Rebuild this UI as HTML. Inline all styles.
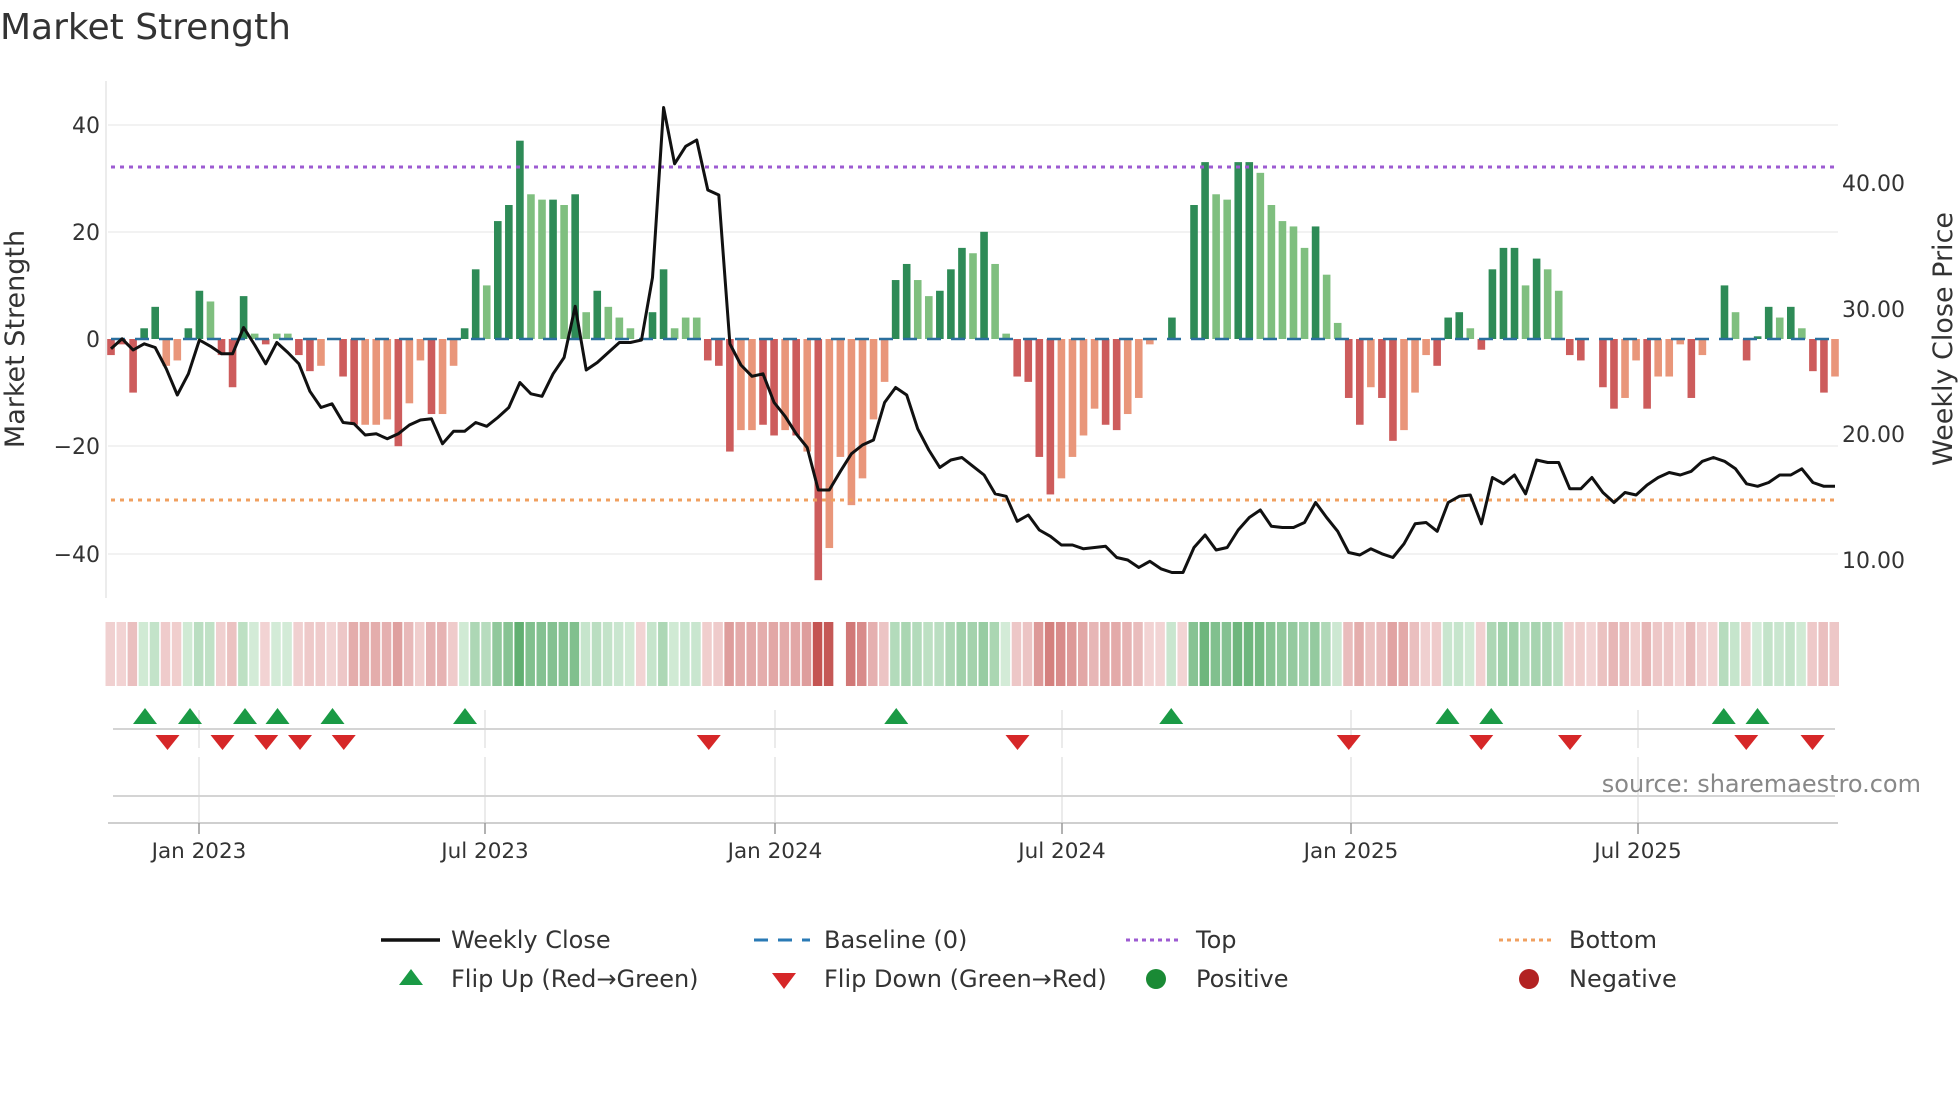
<!DOCTYPE html>
<html><head><meta charset="utf-8"><style>
html,body{margin:0;padding:0;background:#fff;width:1960px;height:1102px;overflow:hidden}
svg{display:block;font-family:"DejaVu Sans","Liberation Sans",sans-serif}
</style></head><body>
<svg id="s" width="1960" height="1102" viewBox="0 0 1960 1102" xmlns="http://www.w3.org/2000/svg">
<text x="0" y="39" font-size="36" fill="#333">Market Strength</text>
<g stroke="#eeeeee" stroke-width="1.5">
<line x1="108" x2="1838" y1="125" y2="125"/><line x1="108" x2="1838" y1="232" y2="232"/>
<line x1="108" x2="1838" y1="446" y2="446"/><line x1="108" x2="1838" y1="554" y2="554"/>
</g>
<line x1="106" x2="106" y1="81" y2="598" stroke="#e6e6e6" stroke-width="1.5"/>
<g font-size="22" fill="#333" text-anchor="end">
<text x="100" y="133">40</text><text x="100" y="240">20</text><text x="100" y="347">0</text>
<text x="100" y="454">−20</text><text x="100" y="562">−40</text>
</g>
<g font-size="22" fill="#333">
<text x="1842" y="191">40.00</text><text x="1842" y="317">30.00</text>
<text x="1842" y="442">20.00</text><text x="1842" y="568">10.00</text>
</g>
<text transform="translate(24,339) rotate(-90)" font-size="27" fill="#333" text-anchor="middle">Market Strength</text>
<text transform="translate(1952,339) rotate(-90)" font-size="27" fill="#333" text-anchor="middle">Weekly Close Price</text>
<g id="bars"></g>
<line x1="111" x2="1838" y1="339" y2="339" stroke="#2a6f9e" stroke-width="2.5" stroke-dasharray="14,10"/>
<line x1="111" x2="1838" y1="167" y2="167" stroke="#9d5bd2" stroke-width="3" stroke-dasharray="4,5"/>
<line x1="111" x2="1838" y1="500" y2="500" stroke="#f0a060" stroke-width="3" stroke-dasharray="4,5"/>
<polyline id="pl" fill="none" stroke="#111" stroke-width="3" stroke-linejoin="round"/>
<g id="heat"></g>
<g stroke="#e4e4e4" stroke-width="1.5">
<line x1="199" x2="199" y1="710" y2="748"/><line x1="485" x2="485" y1="710" y2="748"/><line x1="775" x2="775" y1="710" y2="748"/>
<line x1="1062" x2="1062" y1="710" y2="748"/><line x1="1351" x2="1351" y1="710" y2="748"/><line x1="1638" x2="1638" y1="710" y2="748"/>
<line x1="199" x2="199" y1="757" y2="823"/><line x1="485" x2="485" y1="757" y2="823"/><line x1="775" x2="775" y1="757" y2="823"/>
<line x1="1062" x2="1062" y1="757" y2="823"/><line x1="1351" x2="1351" y1="757" y2="823"/><line x1="1638" x2="1638" y1="757" y2="823"/>
</g>
<line x1="113" x2="1835" y1="729" y2="729" stroke="#d4d4d4" stroke-width="2"/>
<line x1="113" x2="1835" y1="796" y2="796" stroke="#d4d4d4" stroke-width="2"/>
<line x1="108" x2="1838" y1="823" y2="823" stroke="#cfcfcf" stroke-width="2"/>
<g stroke="#999" stroke-width="1.5">
<line x1="199" x2="199" y1="823" y2="834"/><line x1="485" x2="485" y1="823" y2="834"/><line x1="775" x2="775" y1="823" y2="834"/>
<line x1="1062" x2="1062" y1="823" y2="834"/><line x1="1351" x2="1351" y1="823" y2="834"/><line x1="1638" x2="1638" y1="823" y2="834"/>
</g>
<g id="tri"></g>
<text x="1921" y="792" font-size="24" fill="#888" text-anchor="end">source: sharemaestro.com</text>
<g font-size="21.5" fill="#333" text-anchor="middle">
<text x="199" y="858">Jan 2023</text><text x="485" y="858">Jul 2023</text><text x="775" y="858">Jan 2024</text>
<text x="1062" y="858">Jul 2024</text><text x="1351" y="858">Jan 2025</text><text x="1638" y="858">Jul 2025</text>
</g>
<g font-size="24" fill="#333">
<line x1="381" x2="440" y1="940" y2="940" stroke="#111" stroke-width="3.5"/>
<text x="451" y="948">Weekly Close</text>
<line x1="754" x2="810" y1="940" y2="940" stroke="#2a7ab5" stroke-width="3" stroke-dasharray="14,10"/>
<text x="824" y="948">Baseline (0)</text>
<line x1="1126" x2="1182" y1="940" y2="940" stroke="#9d5bd2" stroke-width="3" stroke-dasharray="4,4"/>
<text x="1196" y="948">Top</text>
<line x1="1499" x2="1555" y1="940" y2="940" stroke="#f0a060" stroke-width="3" stroke-dasharray="4,4"/>
<text x="1569" y="948">Bottom</text>
<polygon points="399,985 411,969 423,985" fill="#1a9a45"/>
<text x="451" y="987">Flip Up (Red→Green)</text>
<polygon points="772,973 796,973 784,989" fill="#d62728"/>
<text x="824" y="987">Flip Down (Green→Red)</text>
<circle cx="1156" cy="979" r="10" fill="#1a8a35"/>
<text x="1196" y="987">Positive</text>
<circle cx="1529" cy="979" r="10" fill="#b22222"/>
<text x="1569" y="987">Negative</text>
</g>
</svg>
<script>
var V="R-3 R-1 R-10 G2 G6 s-5 s-4 G2 G9 g7 R-3 R-9 G8 g1 R-1 g1 g1 R-3 R-6 s-5 s0 R-7 R-16 s-16 s-16 s-15 R-20 s-12 s-4 R-14 s-14 s-5 G2 G13 g10 G22 G25 G37 g27 g26 G26 g25 G27 g5 G9 g6 g4 g2 s0 G5 G13 g2 g4 g4 R-4 R-5 R-21 s-17 s-17 R-16 R-18 s-17 R-18 s-21 R-45 s-39 s-22 s-31 s-26 s-15 s-8 G11 G14 g11 g8 G9 G13 G17 g16 G20 g14 g1 R-7 R-8 R-22 R-29 s-26 s-22 s-18 s-13 R-16 R-17 s-14 s-11 s-1 s0 G4 s0 G25 G33 g27 g26 G33 G33 g31 g25 g22 g21 g17 G21 g12 g3 R-11 R-16 s-9 R-11 R-19 s-17 s-10 s-3 R-5 G4 G5 g2 R-2 G13 G17 G17 g10 G15 g13 g9 R-3 R-4 s0 R-9 R-13 s-11 s-4 R-13 s-7 s-7 s-1 R-11 s-3 s0 G10 g5 R-4 G0.5 G6 g4 G6 g2 R-6 R-10 s-7".split(" ");
var L=[279,271,280,275,278,295,316,299,272,277,283,283,262,276,291,274,282,291,313,326,323,338,339,348,347,351,347,340,336,335,355,345,345,338,341,334,326,306,315,317,299,286,245,296,290,282,274,274,272,222,86,131,117,112,152,156,275,292,301,299,322,333,347,358,392,392,377,363,356,352,322,310,316,343,360,374,368,366,373,380,395,397,417,412,424,429,436,436,439,438,437,446,448,454,449,455,458,458,438,428,440,438,424,414,408,421,422,422,418,402,414,425,442,444,439,443,446,435,419,418,425,402,397,396,419,382,387,380,395,368,370,370,391,391,382,394,402,394,396,388,382,378,380,377,369,366,369,375,387,389,386,380,380,375,386,389,389];
var ns="http://www.w3.org/2000/svg",C={G:"#2e8b57",g:"#7fbf7f",R:"#cd5c5c",s:"#e9967a"};
var N=V.length,step=(1835-111)/(N-1);
function el(t,a,p){var e=document.createElementNS(ns,t);for(var k in a)e.setAttribute(k,a[k]);p.appendChild(e);return e}
var B=document.getElementById("bars"),H=document.getElementById("heat");
function mix(a,b,t){var r=[];for(var i=0;i<3;i++)r.push(Math.round(a[i]+(b[i]-a[i])*t));return "rgb("+r+")"}
for(var i=0;i<N;i++){var c=V[i][0],v=parseFloat(V[i].slice(1)),x=111+i*step;
 var y0=339,h=Math.abs(v)*5.36;
 if(h>0.3)el("rect",{x:x-3.8,y:v>0?y0-h:y0,width:7.6,height:h,fill:C[c]},B);
 var t=Math.min(1,Math.abs(v)/40),col;
 if(c=="G"||c=="g")col=mix([214,237,218],[88,170,105],t);
 else col=mix([242,212,212],[196,84,82],Math.pow(t,1.3));
 if(i!=66)el("rect",{x:x-5.5,y:622,width:9.5,height:64,fill:col},H);
}
var pts=[];for(var i=0;i<L.length;i++)pts.push((111+i*step).toFixed(1)+","+(L[i]*1.25).toFixed(1));
document.getElementById("pl").setAttribute("points",pts.join(" "));
var T=document.getElementById("tri");
[116,152,196,222,266,372,717,937,1158,1193,1379,1406].forEach(function(d){var x=d*1.25;el("polygon",{points:(x-12)+",724 "+x+",708 "+(x+12)+",724",fill:"#1a9a45"},T)});
[134,178,213,240,275,567,814,1079,1185,1256,1397,1450].forEach(function(d){var x=d*1.25;el("polygon",{points:(x-12)+",735 "+(x+12)+",735 "+x+",750",fill:"#d62728"},T)});
</script>
</body></html>
